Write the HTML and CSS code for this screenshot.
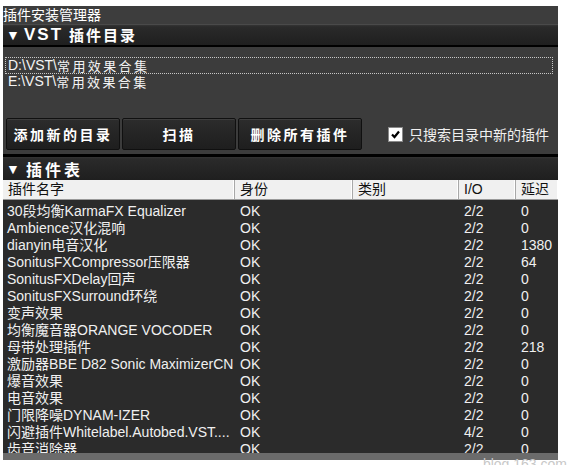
FILE: index.html
```html
<!DOCTYPE html>
<html lang="zh-CN">
<head>
<meta charset="utf-8">
<title>插件安装管理器</title>
<link rel="stylesheet" href="styles.css">
</head>
<body>
<div class="window">
  <div class="titlebar">插件安装管理器</div>
  <div class="section-head head1"><span class="tri">▼</span><span class="latin">VST</span><span class="cjk">插件目录</span></div>
  <div class="dirpane">
    <div class="dirlist">
      <div class="dir selected"><span>D:\VST\</span><span class="cjk-sp">常用效果合集</span></div>
      <div class="dir"><span>E:\VST\</span><span class="cjk-sp">常用效果合集</span></div>
    </div>
    <div class="actions">
      <button class="btn b1">添加新的目录</button>
      <button class="btn b2">扫描</button>
      <button class="btn b3">删除所有插件</button>
      <label class="check"><span class="box"><svg width="11" height="11" viewBox="0 0 11 11"><path d="M2 5.5 L4.5 8 L9 2.5" fill="none" stroke="#000" stroke-width="2.2"/></svg></span>只搜索目录中新的插件</label>
    </div>
  </div>
  <div class="section-head head2"><span class="tri">▼</span><span class="cjk big">插件表</span></div>
  <div class="thead">
    <div class="th">插件名字</div>
    <div class="th">身份</div>
    <div class="th">类别</div>
    <div class="th">I/O</div>
    <div class="th last">延迟</div>
  </div>
  <div class="tbody">
    <div class="row"><span>30段均衡KarmaFX Equalizer</span><span>OK</span><span></span><span>2/2</span><span>0</span></div>
    <div class="row"><span>Ambience汉化混响</span><span>OK</span><span></span><span>2/2</span><span>0</span></div>
    <div class="row"><span>dianyin电音汉化</span><span>OK</span><span></span><span>2/2</span><span>1380</span></div>
    <div class="row"><span>SonitusFXCompressor压限器</span><span>OK</span><span></span><span>2/2</span><span>64</span></div>
    <div class="row"><span>SonitusFXDelay回声</span><span>OK</span><span></span><span>2/2</span><span>0</span></div>
    <div class="row"><span>SonitusFXSurround环绕</span><span>OK</span><span></span><span>2/2</span><span>0</span></div>
    <div class="row"><span>变声效果</span><span>OK</span><span></span><span>2/2</span><span>0</span></div>
    <div class="row"><span>均衡魔音器ORANGE VOCODER</span><span>OK</span><span></span><span>2/2</span><span>0</span></div>
    <div class="row"><span>母带处理插件</span><span>OK</span><span></span><span>2/2</span><span>218</span></div>
    <div class="row"><span>激励器BBE D82 Sonic MaximizerCN</span><span>OK</span><span></span><span>2/2</span><span>0</span></div>
    <div class="row"><span>爆音效果</span><span>OK</span><span></span><span>2/2</span><span>0</span></div>
    <div class="row"><span>电音效果</span><span>OK</span><span></span><span>2/2</span><span>0</span></div>
    <div class="row"><span>门限降噪DYNAM-IZER</span><span>OK</span><span></span><span>2/2</span><span>0</span></div>
    <div class="row"><span>闪避插件Whitelabel.Autobed.VST....</span><span>OK</span><span></span><span>4/2</span><span>0</span></div>
    <div class="row"><span>齿音消除器</span><span>OK</span><span></span><span>2/2</span><span>0</span></div>
  </div>
  <div class="hscroll"></div>
</div>
<div class="watermark">blog.163.com</div>
</body>
</html>
```
FILE: styles.css
```css
html, body {
  margin: 0;
  padding: 0;
  background: #ffffff;
  overflow: hidden;
}
body {
  height: 465px;
  font-family: "Liberation Sans", "Noto Sans CJK SC", sans-serif;
}
.window {
  margin: 6px 0 0 3px;
  width: 555px;
  background: #3b3b3b;
  color: #f2f2f2;
}
.titlebar {
  height: 18px;
  line-height: 18px;
  font-size: 14px;
  background: #3d3d3d;
  color: #ffffff;
}
.section-head {
  display: flex;
  align-items: center;
  background: linear-gradient(#353535 0, #2a2a2a 2px, #1f1f1f 100%);
  color: #ffffff;
  font-weight: bold;
  border-top: 1px solid #4a4a4a;
}
.head1 {
  height: 20px;
  border-bottom: 2px solid #000;
}
.head2 {
  height: 23px;
  border-top: 3px solid #000;
}
.tri {
  font-size: 14px;
  width: 15px;
  padding-left: 3px;
  display: inline-block;
  line-height: 1;
}
.latin {
  font-size: 17px;
  letter-spacing: 2px;
  margin-left: 3px;
  margin-right: 6px;
}
.cjk {
  font-family: "Noto Sans CJK SC", sans-serif;
  font-size: 15px;
  letter-spacing: 2px;
  line-height: 18px;
}
.cjk.big {
  font-size: 16px;
  letter-spacing: 3px;
  margin-left: 5px;
}
.dirpane {
  height: 107px;
  box-sizing: border-box;
  padding: 11px 6px 0 3px;
  background: #3c3c3c;
}
.dirlist {
  height: 60px;
}
.dir {
  display: flex;
  align-items: center;
  height: 15px;
  font-size: 14px;
  line-height: 15px;
  padding-left: 2px;
  color: #f4f4f4;
  box-sizing: border-box;
  white-space: nowrap;
  overflow: visible;
}
.dir.selected {
  outline: 1px dotted #c8c8c8;
  margin-bottom: 1px;
}
.cjk-sp {
  font-family: "Noto Sans CJK SC", sans-serif;
  font-size: 13px;
  line-height: 15px;
  letter-spacing: 2.4px;
}
.actions {
  display: flex;
  align-items: center;
  height: 32px;
}
.btn {
  height: 32px;
  flex-shrink: 0;
  box-sizing: border-box;
  background: linear-gradient(#2c2c2c, #1e1e1e);
  border: 1px solid #101010;
  box-shadow: inset 0 1px 0 #3e3e3e;
  border-radius: 2px;
  color: #ffffff;
  font-family: "Noto Sans CJK SC", sans-serif;
  font-weight: bold;
  font-size: 14px;
  letter-spacing: 2.5px;
  padding: 0;
  margin: 0 2px 0 0;
}
.b1 { width: 114px; }
.b2 { width: 114px; }
.b3 { width: 124px; }
.check {
  display: flex;
  align-items: center;
  flex-shrink: 0;
  white-space: nowrap;
  margin-left: 24px;
  font-size: 14px;
  font-family: "Noto Sans CJK SC", sans-serif;
  color: #f0f0f0;
}
.box {
  width: 15px;
  height: 15px;
  box-sizing: border-box;
  background: #ffffff;
  border: 1px solid #8a8a8a;
  display: inline-flex;
  align-items: center;
  justify-content: center;
  margin-right: 6px;
}
.thead {
  display: grid;
  grid-template-columns: 232px 118px 106px 57px 42px;
  height: 20px;
  background: #f0f0f0;
  color: #111;
  border-bottom: 1px solid #9a9a9a;
  box-sizing: border-box;
}
.th {
  font-size: 14px;
  line-height: 19px;
  padding-left: 5px;
  border-right: 1px solid #a8a8a8;
  box-shadow: inset -1px 0 0 #ffffff;
  white-space: nowrap;
  overflow: hidden;
}
.th.last {
  border-right: none;
}
.tbody {
  height: 253px;
  overflow: hidden;
  background: #2b2b2b;
  padding-top: 3px;
  box-sizing: border-box;
}
.row {
  display: grid;
  grid-template-columns: 232px 118px 106px 57px 42px;
  height: 17px;
  line-height: 17px;
  font-size: 14px;
  color: #f0f0f0;
}
.row span {
  padding-left: 5px;
  white-space: nowrap;
  overflow: hidden;
}
.row span:first-child {
  padding-left: 4px;
}
.hscroll {
  height: 7px;
  background: #6b6b6b;
}
.watermark {
  text-align: right;
  font-size: 14px;
  color: #c8c8c8;
  margin-top: -3px;
  line-height: 14px;
}
```
